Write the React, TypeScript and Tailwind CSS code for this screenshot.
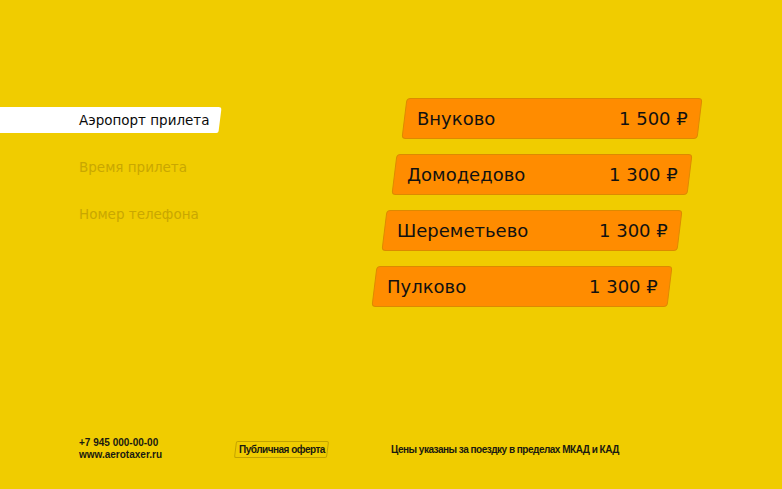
import React from "react";

const airports = [
  { name: "Внуково", price: "1 500 ₽", ml: "ml-[30px]" },
  { name: "Домодедово", price: "1 300 ₽", ml: "ml-[20px]" },
  { name: "Шереметьево", price: "1 300 ₽", ml: "ml-[10px]" },
  { name: "Пулково", price: "1 300 ₽", ml: "ml-0" },
];

export default function App() {
  return (
    <div className="w-[782px] h-[489px] bg-[#F0CC00] flex flex-col overflow-hidden font-['DejaVu_Sans',sans-serif]">
      <div className="flex pt-[98px]">
        <nav className="w-[374px] shrink-0 flex flex-col pt-[9px] gap-[21px] text-[13.5px]">
          <div className="-ml-[10px] w-[230px] h-[26px] bg-white -skew-x-[7deg] rounded-tr-[3px] rounded-br-[2px] flex items-center pl-[89px]">
            <span className="skew-x-[7deg] text-[#0a0a0a]">Аэропорт прилета</span>
          </div>
          <div className="h-[26px] flex items-center pl-[79px] text-[#C9A700]">Время прилета</div>
          <div className="h-[26px] flex items-center pl-[79px] text-[#C9A700]">Номер телефона</div>
        </nav>
        <div className="flex flex-col gap-[15px]">
          {airports.map((a) => (
            <div
              key={a.name}
              className={`${a.ml} w-[296px] h-[41px] bg-[#FF8C00] border border-[#DD8A00] rounded-[4px] -skew-x-[7deg] flex items-center justify-between pl-[12px] pr-[11px] text-[18px] text-[#111]`}
            >
              <span className="skew-x-[7deg]">{a.name}</span>
              <span className="skew-x-[7deg]">{a.price}</span>
            </div>
          ))}
        </div>
      </div>
      <div className="mt-auto mb-[28px] flex items-center pl-[79px] font-['Liberation_Sans',sans-serif] font-bold text-[10px] text-[#1a1a10] whitespace-nowrap">
        <div className="w-[156px] flex flex-col leading-[12px]">
          <span>+7 945 000-00-00</span>
          <span>www.aerotaxer.ru</span>
        </div>
        <div className="w-[93px] h-[17px] border border-[#C4A300] rounded-[2px] -skew-x-[7deg] flex items-center justify-center">
          <span className="skew-x-[7deg] tracking-[-0.5px]">Публичная оферта</span>
        </div>
        <div className="ml-[63px] tracking-[-0.5px]">Цены указаны за поездку в пределах МКАД и КАД</div>
      </div>
    </div>
  );
}
